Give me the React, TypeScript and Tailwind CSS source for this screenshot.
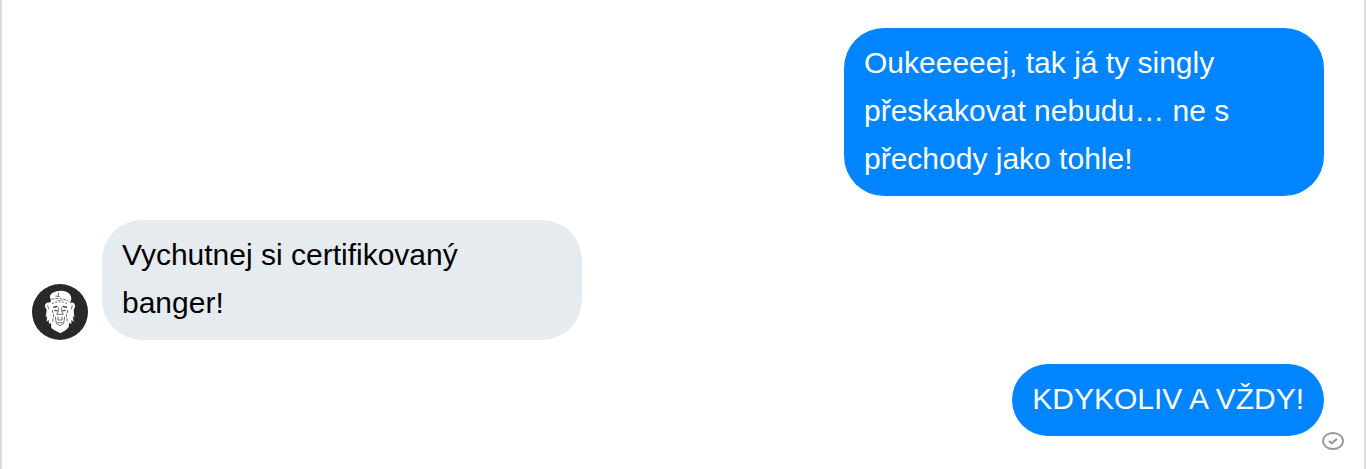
import React from "react";
import clsx from "clsx";

type Message = {
  text: string;
  mine: boolean;
  seen?: boolean;
};

const messages: Message[] = [
  {
    text: "Oukeeeeej, tak já ty singly přeskakovat nebudu… ne s přechody jako tohle!",
    mine: true,
  },
  { text: "Vychutnej si certifikovaný banger!", mine: false },
  { text: "KDYKOLIV A VŽDY!", mine: true, seen: true },
];

function Avatar() {
  return (
    <svg viewBox="0 0 168 168" className="size-14 shrink-0" aria-hidden="true">
      <circle cx="84" cy="84" r="84" fill="#292929" />
      {/* head and beard */}
      <path
        fill="#fff"
        d="M58 50 L52 56 C42 54 37 62 40 70 L44 78 L41 100 L45 97 L44 113 L50 108 L51 120 L57 117 L58 132 L66 138 L85 148 L102 138 L110 130 L111 116 L118 120 L118 108 L125 113 L122 96 L127 101 L125 78 L129 68 C130 58 124 53 115 56 L108 50 Z"
      />
      {/* beret */}
      <path
        fill="#fff"
        d="M54 40 C53 28 66 21 88 20 C107 20 119 32 118 46 L114 56 C98 48 80 47 58 54 Z"
      />
      <g fill="none" stroke="#292929" strokeWidth="2">
        <path d="M80 26 L78 37 M70 36 L83 38" />
        <path d="M58 46 C76 41 94 44 109 51" strokeDasharray="9 3" />
        <path d="M60 59 C76 51 96 53 108 60" strokeDasharray="6 4" />
        <path d="M47 64 L50 76 M121 64 L118 76" />
        <path d="M64 70 L76 67 M92 67 L105 70" strokeWidth="4" />
        <path d="M67 79 L77 81 M91 81 L101 79" strokeWidth="3" />
        <path d="M79 70 L79 82 L74 91 H94 L89 82 L89 70" />
        <path d="M60 78 L65 93 L62 113 M108 78 L103 93 L106 113" strokeDasharray="10 3" />
        <path d="M70 98 L73 118 L84 125 L95 118 L98 98" />
        <path d="M78 98 V108 H90 V98 M76 116 H92" />
      </g>
    </svg>
  );
}

function SeenMark() {
  return (
    <svg
      viewBox="0 0 22 18"
      className="absolute -right-5 -bottom-3.5 h-[18px] w-[22px]"
      fill="none"
      stroke="#999"
      role="img"
      aria-label="Doručeno"
    >
      <ellipse cx="11" cy="9" rx="10" ry="8" strokeWidth="1.9" />
      <path d="M7 9 L9.8 11.3 L15 6.8" strokeWidth="2.1" />
    </svg>
  );
}

function Bubble({ text, mine, seen }: Message) {
  return (
    <li className={clsx("flex items-end gap-3.5", mine && "justify-end")}>
      {!mine && <Avatar />}
      <div
        className={clsx(
          "relative max-w-[480px] rounded-[40px] px-5 pt-[11px] pb-[13px]",
          mine ? "bg-[#0084ff] text-white" : "bg-[#e6ebef] text-black"
        )}
      >
        <p>{text}</p>
        {seen && <SeenMark />}
      </div>
    </li>
  );
}

export default function App() {
  return (
    <main className="min-h-screen border-x-2 border-[#dcdcdc] bg-white pt-7 pr-10 pb-8 pl-[30px] font-['Liberation_Sans',Arial,sans-serif] text-[30px] leading-[48px]">
      <ul className="flex flex-col gap-6">
        {messages.map((message) => (
          <Bubble key={message.text} {...message} />
        ))}
      </ul>
    </main>
  );
}
